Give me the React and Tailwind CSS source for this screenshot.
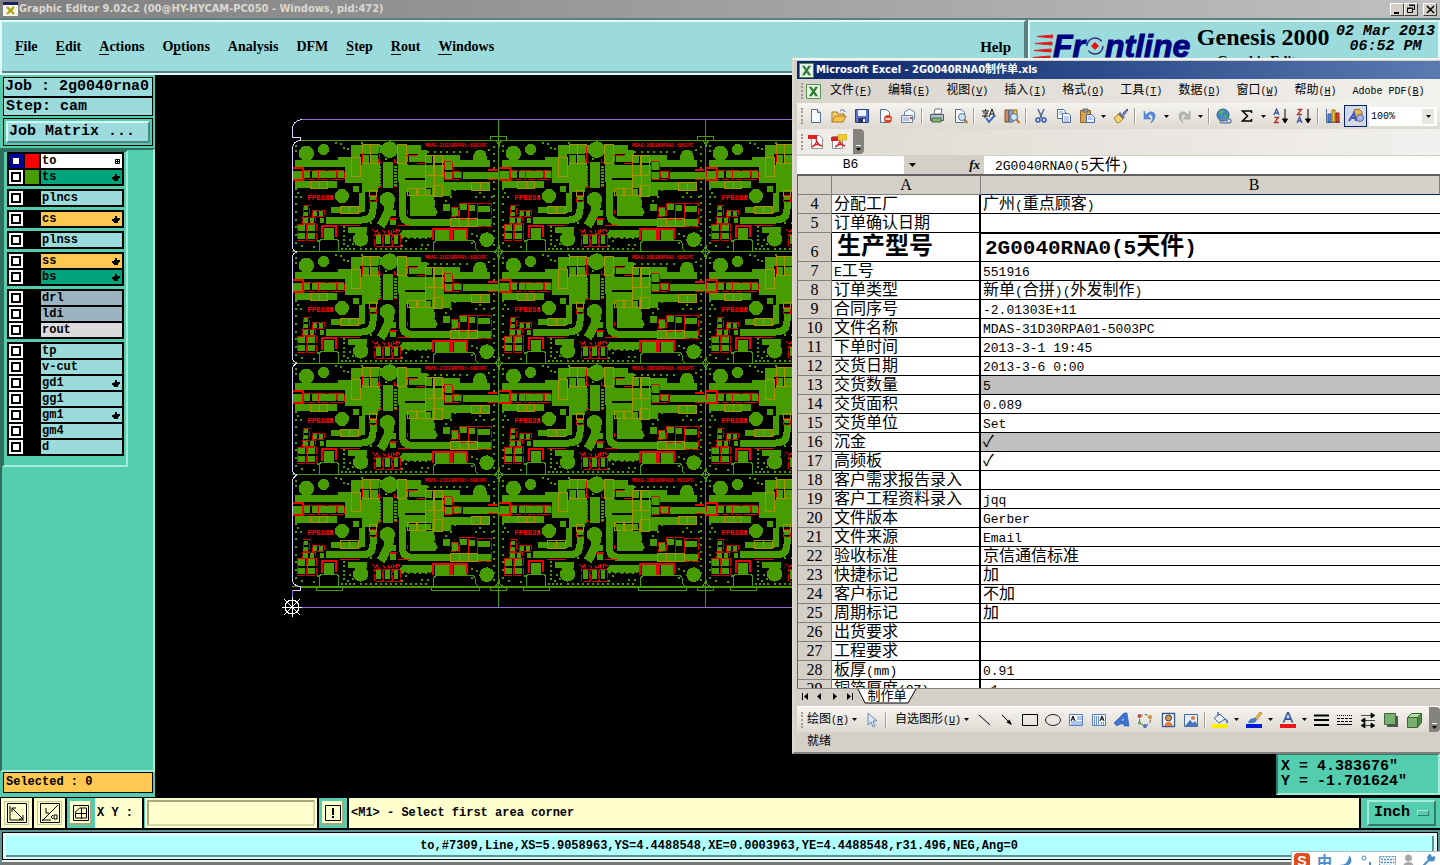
import { Fragment } from 'react';

const menus = [
  ['', 'F', 'ile'],
  ['', 'E', 'dit'],
  ['', 'A', 'ctions'],
  ['O', 'p', 'tions'],
  ['Analysis', '', ''],
  ['DFM', '', ''],
  ['', 'S', 'tep'],
  ['', 'R', 'out'],
  ['', 'W', 'indows'],
];

const layerGroups = [
  [
    { name: 'to', bg: 'bg-white', swatch: 'bg-[#ff0000]', mark: 'grid', active: true },
    { name: 'ts', bg: 'bg-[#00a47c]', swatch: 'bg-[#469c00]', mark: 'hand' },
  ],
  [{ name: 'plncs', bg: 'bg-[#9cdbdb]' }],
  [{ name: 'cs', bg: 'bg-[#ffc850]', mark: 'hand' }],
  [{ name: 'plnss', bg: 'bg-[#9cdbdb]' }],
  [
    { name: 'ss', bg: 'bg-[#ffc850]', mark: 'hand' },
    { name: 'bs', bg: 'bg-[#00a47c]', mark: 'hand' },
  ],
  [
    { name: 'drl', bg: 'bg-[#9cb4bf]' },
    { name: 'ldi', bg: 'bg-[#9cb4bf]' },
    { name: 'rout', bg: 'bg-[#dcdadb]' },
  ],
  [
    { name: 'tp', bg: 'bg-[#9cdbdb]' },
    { name: 'v-cut', bg: 'bg-[#9cdbdb]' },
    { name: 'gd1', bg: 'bg-[#9cdbdb]', mark: 'hand' },
    { name: 'gg1', bg: 'bg-[#9cdbdb]' },
    { name: 'gm1', bg: 'bg-[#9cdbdb]', mark: 'hand' },
    { name: 'gm4', bg: 'bg-[#9cdbdb]' },
    { name: 'd', bg: 'bg-[#9cdbdb]' },
  ],
];

const excelMenus = [
  ['文件', 'F'],
  ['编辑', 'E'],
  ['视图', 'V'],
  ['插入', 'I'],
  ['格式', 'O'],
  ['工具', 'T'],
  ['数据', 'D'],
  ['窗口', 'W'],
  ['帮助', 'H'],
  ['Adobe PDF', 'B'],
];

const rows = [
  [4, '分配工厂', '广州(重点顾客)'],
  [5, '订单确认日期', ''],
  [6, '生产型号', '2G0040RNA0(5天件)'],
  [7, 'E工号', '551916'],
  [8, '订单类型', '新单(合拼)(外发制作)'],
  [9, '合同序号', '-2.01303E+11'],
  [10, '文件名称', 'MDAS-31D30RPA01-5003PC'],
  [11, '下单时间', '2013-3-1 19:45'],
  [12, '交货日期', '2013-3-6 0:00'],
  [13, '交货数量', '5'],
  [14, '交货面积', '0.089'],
  [15, '交货单位', 'Set'],
  [16, '沉金', '✓'],
  [17, '高频板', '✓'],
  [18, '客户需求报告录入', ''],
  [19, '客户工程资料录入', 'jqq'],
  [20, '文件版本', 'Gerber'],
  [21, '文件来源', 'Email'],
  [22, '验收标准', '京信通信标准'],
  [23, '快捷标记', '加'],
  [24, '客户标记', '不加'],
  [25, '周期标记', '加'],
  [26, '出货要求', ''],
  [27, '工程要求', ''],
  [28, '板厚(mm)', '0.91'],
  [29, '铜箔厚度(OZ)', ' 1'],
];

/* ---------- board drawing, three units per screen pixel ---------- */

const copper = [
  [30, 150, 175, 21], [160, 141, 60, 26], [198, 105, 210, 28], [198, 130, 32, 45], [180, 173, 100, 46],
  [228, 160, 56, 74], [204, 228, 76, 20], [222, 240, 18, 20], [295, 156, 30, 78], [340, 166, 138, 52],
  [340, 132, 28, 40], [342, 218, 30, 30], [372, 137, 50, 24], [400, 122, 26, 16], [420, 135, 105, 26],
  [505, 152, 110, 21], [480, 160, 20, 22], [480, 186, 20, 22], [506, 186, 22, 19], [534, 186, 112, 21],
  [372, 210, 106, 24], [470, 218, 145, 22], [440, 236, 57, 22], [372, 238, 66, 18], [22, 183, 28, 24],
  [57, 185, 18, 20], [80, 185, 18, 20], [103, 185, 50, 20], [156, 185, 20, 20], [30, 215, 125, 19],
  [138, 291, 90, 18], [232, 136, 20, 24], [258, 136, 20, 24], [56, 288, 14, 13], [53, 306, 17, 13],
  [83, 305, 14, 14], [101, 305, 14, 14], [54, 326, 16, 14], [74, 326, 14, 14], [104, 326, 14, 14],
  [38, 344, 22, 20], [67, 344, 22, 20], [38, 369, 22, 20], [67, 369, 22, 20], [116, 354, 32, 34],
  [190, 351, 55, 18], [254, 256, 18, 14], [314, 302, 20, 18], [314, 328, 20, 18], [273, 376, 14, 26],
  [300, 376, 14, 26], [326, 376, 14, 26], [450, 361, 42, 30], [507, 361, 38, 30], [474, 283, 22, 20],
  [501, 296, 17, 22], [526, 282, 20, 20], [552, 286, 19, 17], [579, 289, 35, 17], [470, 328, 148, 21],
  [565, 140, 40, 20], [375, 258, 70, 60], [350, 361, 90, 22], [440, 300, 16, 14],
];

const slots = [
  [180, 219, 48, 8], [222, 219, 9, 32], [284, 164, 8, 62], [328, 164, 8, 62], [226, 133, 6, 32],
  [253, 132, 5, 30], [280, 130, 10, 30], [362, 158, 60, 6], [476, 156, 5, 54], [360, 205, 60, 5],
  [503, 207, 135, 5], [440, 130, 5, 30], [365, 256, 8, 26], [55, 208, 120, 6],
];

const silk = [
  [22, 176, 32, 35], [56, 183, 45, 26], [101, 183, 55, 26], [155, 183, 24, 26], [478, 155, 24, 55],
  [504, 184, 26, 24], [54, 286, 18, 36], [82, 303, 36, 18], [52, 324, 38, 18], [36, 343, 28, 48],
  [66, 343, 28, 48], [269, 374, 22, 36], [296, 374, 22, 36], [323, 374, 24, 36], [500, 293, 20, 28],
  [524, 280, 26, 48], [551, 280, 26, 48], [578, 282, 42, 68], [252, 256, 22, 20], [313, 325, 22, 3],
];

const mask = [
  [232, 104, 25, 57], [257, 104, 27, 57], [199, 142, 27, 58], [337, 104, 27, 58], [420, 136, 27, 62],
  [446, 136, 27, 62], [420, 198, 27, 58], [367, 235, 26, 22], [396, 235, 26, 22], [446, 226, 26, 34],
  [560, 217, 25, 24], [585, 217, 27, 24], [76, 215, 26, 20], [102, 215, 26, 20], [166, 289, 27, 23],
  [193, 289, 28, 23], [254, 241, 21, 20], [495, 327, 27, 24], [522, 327, 28, 24], [550, 327, 28, 24],
];

const range = (n, from, step) => Array.from({ length: n }, (_, i) => from + i * step);

const vias = [
  ...range(9, 215, 23).map((y) => [33, y]),
  ...range(15, 112, 21).map((y) => [628, y]),
  ...range(14, 228, 15).map((x) => [x, 417]),
  ...range(4, 172, 12).map((x) => [x, 417]),
  ...range(6, 430, 19).map((x) => [x, 128]),
  ...range(5, 352, 13).map((y) => [176, y]),
  [153, 99], [168, 102], [176, 115], [190, 117], [33, 110], [33, 125], [40, 250], [48, 262], [196, 390],
  [232, 100], [303, 149], [545, 128], [612, 122], [572, 262], [585, 250], [597, 262], [497, 262], [484, 274],
  [510, 240], [575, 128], [412, 406], [430, 406], [100, 395], [88, 412], [258, 340], [240, 360], [350, 408],
  [362, 395], [560, 372], [575, 380], [140, 262], [620, 262], [52, 410], [190, 410], [560, 400], [204, 404],
];

function BoardUnit() {
  return (
    <symbol id="unit" viewBox="21 91 621 336" overflow="visible">
      <g fill="#469c00">
        <circle cx="64" cy="131" r="23" />
        <circle cx="116" cy="119" r="17" />
        <circle cx="314" cy="120" r="25" />
        <circle cx="585" cy="140" r="20" />
        <circle cx="171" cy="259" r="21" />
        <circle cx="227" cy="388" r="23" />
        <circle cx="605" cy="390" r="22" />
        <circle cx="307" cy="270" r="23" />
        {copper.map(([x, y, w, h], i) => (
          <rect key={i} x={x} y={y} width={w} height={h} />
        ))}
        <path d="M444 258l8 22-4 10 10 18-6 10h-20v-60zM346 372l8-11h80l8 8-4 18-8-4-8 6-8-6-8 6-8-6-8 6-10-6-10 4-10-5-8 5-8-6z" />
      </g>
      <g fill="none" stroke="#469c00">
        <path d="M352 230V308Q352 339 385 339H500" strokeWidth="21" />
        <path d="M264 278V298Q264 331 230 331H122" strokeWidth="21" />
        <path d="M231 250V308" strokeWidth="17" />
        <path d="M314 272Q316 305 287 348" strokeWidth="27" />
        <path d="M103 425V395L110 388H155L161 395V425M445 425V400L452 393H565L572 402V416L579 424" strokeWidth="3" />
        <path d="M22 425H641M641 91V425M628 91Q640 96 640 112M654 91Q642 96 642 112M628 425Q640 420 640 406M654 425Q642 420 642 406" strokeWidth="3" />
      </g>
      <g fill="#000">
        {slots.map(([x, y, w, h], i) => (
          <rect key={i} x={x} y={y} width={w} height={h} />
        ))}
      </g>
      <g fill="#469c00">
        {range(7, 168, 9).map((y) => (
          <path key={y} d={`M278 ${y}h10v6h-10zM327 ${y}h9v6h-9z`} />
        ))}
        {vias.map(([x, y], i) => (
          <rect key={i} x={x - 3} y={y - 3} width="6" height="6" />
        ))}
      </g>
      <g fill="none" stroke="#e00000" strokeWidth="3" strokeDasharray="22 5">
        {silk.map(([x, y, w, h], i) => (
          <rect key={i} x={x} y={y} width={w} height={h} />
        ))}
      </g>
      <g fill="none" stroke="#a89000" strokeWidth="3">
        {mask.map(([x, y, w, h], i) => (
          <rect key={i} x={x} y={y} width={w} height={h} />
        ))}
      </g>
      <g fill="none" stroke="#f00000">
        <path d="M22 176H54V211H22M110 384V350H154V382M444 391V357H546V389" strokeWidth="6" />
        <path d="M498 357V390" strokeWidth="10" />
        <path d="M610 180H637" strokeWidth="6" />
        <path d="M610 208H637M165 346H222M280 149V158H290M327 149V158H337M280 230H290M327 230H337M362 137H396M396 160H424M340 346H374M233 131V158M284 110V160M366 300V312M262 358l9 10 6-8 4 12M292 362l8 6M310 360v10h8v-10M326 358v10l8-8v10M338 358l8 8" strokeWidth="3" />
      </g>
      <g fill="#ff0000" fontWeight="bold" className="font-['Liberation_Mono',monospace]">
        <text x="67" y="271" fontSize="22">FPB888</text>
        <text x="420" y="113" fontSize="14">MDAS-31D30RPA01-5003PC</text>
      </g>
    </symbol>
  );
}

function Board() {
  const tops = [65, 177, 288, 400];
  const lefts = [137, 344, 551];
  return (
    <svg className="block h-[722px] w-[1285px] shrink-0" viewBox="0 0 1285 722" shapeRendering="crispEdges">
      <defs>
        <BoardUnit />
      </defs>
      {tops.map((y) => lefts.map((x) => <use key={`${x}-${y}`} href="#unit" x={x} y={y} width="207" height="112" />))}
      <g fill="none" stroke="#469c00">
        <path d="M145 65.500H800M343.500 45V532M550.500 45V532M335.500 65V61.500H351.500V65M542.500 65V61.500H558.500V65" />
        <path d="M145 511.500H800" strokeWidth="2" />
        <path d="M161.500 512V515.500H187.500V512M276.500 512V515.500H324.500V512M335.500 512V515.500H351.500V512M368.500 512V515.500H394.500V512M483.500 512V515.500H531.500V512M542.500 512V515.500H558.500V512M575.500 512V515.500H601.500V512" />
      </g>
      <g fill="none" stroke="#9468dc">
        <path d="M147 44.500H800M137 532.500H800M137.500 515V532" />
      </g>
      <path
        d="M147 44.500Q138 46 137.500 53V62.500H145.500V65.500Q138 66 137.500 73V172Q138 176 142 177Q138 178 137.500 182V283Q138 287 142 288Q138 290 137.500 294V395Q138 399 142 400Q138 402 137.500 406V505Q138 511 145.500 511.500V515.500H137.500"
        fill="none"
        stroke="#ddd0ff"
      />
      <g fill="none" stroke="#fff">
        <circle cx="137" cy="532" r="7" />
        <path d="M127 532.500H147M137.500 522V542M129 524L145 540M145 524L129 540" />
      </g>
    </svg>
  );
}

/* ---------- toolbar icons, 16 x 16 ---------- */

const page = <path d="M3.500 1.500h6l3 3v10h-9z" fill="#f8fbff" stroke="#5a6f98" />;
const lens = (
  <>
    <circle cx="10" cy="9" r="3.500" fill="#cfe6f7" stroke="#56708c" />
    <path d="M12.500 11.500l3 3.500" stroke="#b5762c" strokeWidth="2" />
  </>
);
const acrobat = <path d="M4 13c4-2 5-6 4-9M4 13c3-3 7-3 10-1M8 4c0 3 2 7 6 8" fill="none" stroke="#d8232a" strokeWidth="1.500" />;

const icons = {
  new: <>{page}<path d="M9.500 1.500v3h3" fill="#c7d6ee" stroke="#5a6f98" /></>,
  open: <><path d="M1 14V4h5l1 2h6v3" fill="#f4d476" stroke="#a57b20" /><path d="M1 14l3-6h11l-3 6z" fill="#fbc34d" stroke="#a57b20" /><path d="M9 3q3-3 5 1" fill="none" stroke="#3c64a8" /></>,
  save: <><path d="M1.500 1.500h13v13h-13z" fill="#5a74cc" stroke="#2b3f8c" /><path d="M4 2h8v6H4z" fill="#eef3ff" /><path d="M4.500 10h7v5h-7z" fill="#26345c" /><path d="M9 11h2v3H9z" fill="#fff" /></>,
  permission: <>{page}<circle cx="11" cy="11" r="4" fill="#d8492c" /><path d="M8.500 11h5" stroke="#fff" strokeWidth="1.500" /></>,
  mail: <><path d="M4.500 4l5-3 5 3v7h-10z" fill="#f4f7fc" stroke="#70809c" /><path d="M1.500 7.500h11v7h-11z" fill="#e8eefa" stroke="#70809c" /><path d="M3 10h6M3 12h6" stroke="#7f9ac4" /><path d="M10 9h2v2h-2z" fill="#d8492c" /></>,
  print: <><path d="M5 6l1-5h7l-1 5z" fill="#fff" stroke="#6c7888" /><path d="M1.500 6.500h13v6h-13z" fill="#b8c2cc" stroke="#4c5868" /><path d="M3 10h9v4H3z" fill="#7fc05a" stroke="#4c5868" /></>,
  preview: <>{page}{lens}</>,
  spelling: <><path d="M1 3h7M4.500 1v2M2 5h5L4 7v3M1 8h6" fill="none" stroke="#111" /><path d="M8 9l3-8 3 8M9 6h4" fill="none" stroke="#111" /><path d="M5 10l3 4 6-7" fill="none" stroke="#3b69c0" strokeWidth="2" /></>,
  research: <><path d="M1 2h4v12H1z" fill="#cf8e5f" stroke="#7d4c26" /><path d="M5 2h4v12H5z" fill="#8eaadb" stroke="#44608c" /><path d="M9 2h4v9H9z" fill="#e4c45b" stroke="#8c7020" />{lens}</>,
  cut: <><path d="M5 1l4 9M11 1L7 10" stroke="#51688c" strokeWidth="1.500" /><circle cx="5" cy="12" r="2" fill="none" stroke="#2f58b8" strokeWidth="1.500" /><circle cx="11" cy="12" r="2" fill="none" stroke="#2f58b8" strokeWidth="1.500" /></>,
  copy: <><path d="M1.500 1.500h6l2 2v7h-8z" fill="#fff" stroke="#4a68b0" /><path d="M6.500 5.500h6l2 2v7h-8z" fill="#fff" stroke="#4a68b0" /><path d="M3 4h4M3 6h3M8 9h5M8 11h5M8 13h5" stroke="#7f9be0" /></>,
  paste: <><path d="M1.500 2.500h10v12h-10z" fill="#d8a04c" stroke="#8c6420" /><path d="M4 1h5v3H4z" fill="#999" stroke="#666" /><path d="M7.500 6.500h5l3 3v5h-8z" fill="#eef4ff" stroke="#4a68b0" /><path d="M9 9h3M9 11h5" stroke="#7f9be0" /></>,
  painter: <><path d="M10 5l4-4 1 1-4 5z" fill="#8c8ccc" stroke="#50508c" /><path d="M7 4l5 5-2 2-5-5z" fill="#5f6fa0" /><path d="M5 6l5 5q-3 4-6 4L1 10q2 0 4-4z" fill="#f2d774" stroke="#a88424" /></>,
  undo: <path d="M4 7q5-6 9-1 1 5-4 9 3-5 1-8-2-2-4 1l3 3H2V3z" fill="#5b8de0" stroke="#3465b8" strokeWidth=".5" />,
  redo: <path d="M12 7Q7 1 3 6q-1 5 4 9-3-5-1-8 2-2 4 1l-3 3h7V3z" fill="#b8b8b4" stroke="#909090" strokeWidth=".5" />,
  link: <><circle cx="7" cy="7" r="6" fill="#3f88c8" stroke="#2c6090" /><path d="M3 4q3-3 5-2-1 4-4 5zM8 6l4 1-3 4z" fill="#58ae50" /><path d="M6 11h3a2 2 0 010 4H6a2 2 0 010-4zM11 11h2a2 2 0 010 4h-2" fill="none" stroke="#7088a8" strokeWidth="1.500" /></>,
  sum: <path d="M12.500 5V3h-9l5 5-5 5h9v-2" fill="none" stroke="#000" strokeWidth="1.500" />,
  sortAsc: <><path d="M1 7l2.500-6L6 7M2 5h3" fill="none" stroke="#3a55a4" strokeWidth="1.300" /><path d="M1.500 9.500h4l-4 5h4.500" fill="none" stroke="#a83232" strokeWidth="1.300" /><path d="M12 1v13M9.500 11l2.500 4 2.500-4z" stroke="#000" /></>,
  sortDesc: <><path d="M1.500 1.500h4l-4 5h4.500" fill="none" stroke="#a83232" strokeWidth="1.300" /><path d="M1 15l2.500-6L6 15M2 13h3" fill="none" stroke="#3a55a4" strokeWidth="1.300" /><path d="M12 1v13M9.500 11l2.500 4 2.500-4z" stroke="#000" /></>,
  chart: <><path d="M1.500 1v13.500H15" fill="none" stroke="#4a6890" /><path d="M3 6h3v8H3z" fill="#5c8ce0" stroke="#2a4c90" /><path d="M7 2h3v12H7z" fill="#f0c040" stroke="#907010" /><path d="M11 5h3v9h-3z" fill="#d84a30" stroke="#802010" /></>,
  drawing: <><path d="M6 2l5-1 3 3v6l-5 1-3-3z" fill="#e8b850" stroke="#987020" /><circle cx="12" cy="10" r="3.500" fill="#a9b8e0" stroke="#5060a0" /><path d="M1 13L6 5l2 8M3 10h4" fill="none" stroke="#4858b0" strokeWidth="2" /></>,
  pdf: <><path d="M3.500 1.500h8l3 3v10h-11z" fill="#fff" stroke="#909090" /><path d="M0 1h9v4H0z" fill="#e02020" />{acrobat}</>,
  pdfMail: <><path d="M1.500 2.500h10v12h-10z" fill="#fff" stroke="#909090" /><path d="M0 3h7v4H0z" fill="#e02020" />{acrobat}<path d="M7 0h9v6h-5l-2 2V6H7z" fill="#f4cc30" stroke="#b89010" strokeWidth=".5" /></>,
  pointer: <path d="M4 1v12l3-3 2 5 2-1-2-5h4z" fill="#dbe6f8" stroke="#6c88b8" />,
  line: <path d="M3 3l11 10" stroke="#000" />,
  arrow: <><path d="M3 3l8 8" stroke="#000" /><path d="M13 13L7.500 10.500l3-3z" fill="#000" /></>,
  rect: <path d="M.5 2.500h15v11H.5z" fill="none" stroke="#000" />,
  ellipse: <ellipse cx="8" cy="8" rx="7.500" ry="5.500" fill="none" stroke="#222" />,
  textBox: <><path d="M1.500 2.500h13v11h-13z" fill="#f4f8ff" stroke="#5a7cc0" /><path d="M3 9l2-5 2 5M4 7h2" fill="none" stroke="#000" /><path d="M9 5h5M9 7h5M3 10h11M3 12h11" stroke="#6a90d8" /></>,
  vertText: <><path d="M1.500 2.500h13v11h-13z" fill="#f4f8ff" stroke="#5a7cc0" /><path d="M9 9l2-5 2 5M10 7h2" fill="none" stroke="#000" /><path d="M3.500 4v9M5.500 4v9M7.500 4v9M10.500 10v3M12.500 10v3" stroke="#6a90d8" /></>,
  wordArt: <path d="M0 11L10 1h3l2 13h-5v-2H6l-3 2zM7 9h3V5z" fill="#3c74d8" stroke="#2450a0" strokeWidth=".6" fillRule="evenodd" />,
  diagram: <><circle cx="8" cy="8" r="5.500" fill="none" stroke="#555" strokeDasharray="3 2" /><circle cx="2.500" cy="4" r="2" fill="#c04848" /><circle cx="13" cy="5" r="2" fill="#d89030" /><circle cx="8" cy="14" r="2" fill="#4a70c0" /><circle cx="2.500" cy="11" r="1.500" fill="#50a050" /></>,
  clipArt: <><path d="M2.500 1.500h12v13h-12z" fill="#fff" stroke="#3a5c98" strokeWidth="1.400" /><circle cx="8.500" cy="6" r="3" fill="#d89a58" stroke="#333" /><path d="M4.500 14q0-4 4-4t4 4z" fill="#e87838" /></>,
  picture: <><path d="M1.500 2.500h13v12h-13z" fill="#e6effc" stroke="#4a6ab0" /><circle cx="10" cy="6" r="2" fill="#e07848" /><path d="M2 14l5-6 3 3 2-2 2.500 4v1z" fill="#4e74b8" /></>,
  fill: <><path d="M2 6l6-4 5 5-6 4z" fill="#e4ecf8" stroke="#506888" /><path d="M6 4V0M13 7q3 2 2 4" fill="none" stroke="#3c68b8" strokeWidth="1.500" /><path d="M0 12h16v4H0z" fill="#ffee00" /></>,
  lineColor: <><path d="M9 6l5-6 2 1-5 7z" fill="#f0b840" stroke="#906820" strokeWidth=".6" /><path d="M2 11q1-5 7-5l2 2q-2 4-9 3z" fill="#4878c8" /><path d="M0 12h16v4H0z" fill="#0018d8" /></>,
  fontColor: <><path d="M3.500 10.500L8 0l4.500 10.500M5 7h6" fill="none" stroke="#3c5ca8" strokeWidth="1.800" /><path d="M0 12h16v4H0z" fill="#e81818" /></>,
  lineStyle: <path d="M0 3.500h15M0 8h15M0 13h15" stroke="#000" strokeWidth="2" />,
  dashStyle: <><path d="M0 3.500h15" stroke="#000" strokeDasharray="1 1" /><path d="M0 6.500h15M0 9.500h15" stroke="#000" strokeDasharray="3 1" /><path d="M0 12.500h15" stroke="#000" /></>,
  arrowStyle: <path d="M1 3.500h12M3 8.500h12M1 13.500h13M11 1l4 2.500L11 6zM5 6L1 8.500 5 11zM5 11l-4 2.500L5 16zM11 11l4 2.500-4 2.500z" fill="#000" stroke="#000" strokeWidth=".7" />,
  shadow: <><path d="M4 4h11v11H4z" fill="#555" /><path d="M1.500 1.500h11v11h-11z" fill="#78b070" stroke="#386830" /></>,
  cube: <><path d="M1.500 5.500h10v10h-10z" fill="#78b070" stroke="#386830" /><path d="M1.500 5.500l4-4h10l-4 4z" fill="#b4dca8" stroke="#386830" /><path d="M11.500 5.500l4-4v9l-4 5z" fill="#4c8844" stroke="#386830" /></>,
};

const standardBar = [
  'new', 'open', 'save', 'permission', 'mail', '|', 'print', 'preview', '|', 'spelling', 'research', '|',
  'cut', 'copy', 'paste', 'v', 'painter', '|', 'undo', 'v', 'redo', 'v', '|', 'link', 'sum', 'v',
  'sortAsc', 'sortDesc', '|', 'chart', 'drawing',
];
const shapeBar = [
  'line', 'arrow', 'rect', 'ellipse', 'textBox', 'vertText', 'wordArt', 'diagram', 'clipArt', 'picture', '|',
  'fill', 'v', 'lineColor', 'v', 'fontColor', 'v', 'lineStyle', 'dashStyle', 'arrowStyle', 'shadow', 'cube',
];

function Icon({ name }) {
  return <svg className="h-4 w-4" viewBox="0 0 16 16">{icons[name]}</svg>;
}

function Caret() {
  return <svg className="h-[3px] w-[5px]" viewBox="0 0 5 3"><path d="M0 0h5L2.500 3z" /></svg>;
}

function Grip() {
  return <span className="ml-1 h-4 w-[3px] shrink-0 border-l-2 border-dotted border-[#a09c94]" />;
}

function Tools({ items }) {
  return items.map((item, i) => {
    if (item === '|') return <span key={i} className="mx-[2px] h-4 w-[2px] shrink-0 border-l border-[#a09c94] bg-white" />;
    if (item === 'v') {
      return (
        <button key={i} aria-label="More" className="flex h-[22px] w-[11px] shrink-0 items-center justify-center">
          <Caret />
        </button>
      );
    }
    return (
      <button
        key={i}
        aria-label={item}
        className={`flex h-[22px] w-[23px] shrink-0 items-center justify-center ${item === 'drawing' ? 'border border-[#0a246a] bg-[#d4d8e8]' : ''}`}
      >
        <Icon name={item} />
      </button>
    );
  });
}

function BarEnd() {
  return (
    <button aria-label="Toolbar options" className="flex h-full w-[11px] shrink-0 flex-col items-center justify-end gap-[2px] rounded-r bg-[#85837e] pb-[3px]">
      <span className="h-px w-[5px] bg-white" />
      <Caret />
    </button>
  );
}

// Latin runs are set smaller so that they take half the width of a Chinese character
function Mixed({ text, latin }) {
  return text.split(/([\u2700-\uffff]+)/).filter(Boolean).map((part, i) => (
    part.charCodeAt(0) >= 0x2700 ? <Fragment key={i}>{part}</Fragment> : <span key={i} className={latin}>{part}</span>
  ));
}

function MenuLabel({ text, hotkey }) {
  return (
    <>
      <Mixed text={text} latin="text-[10px]" />
      <span className="text-[10px]">(<u>{hotkey}</u>)</span>
    </>
  );
}

function TitleBar() {
  const box = 'flex h-[13px] w-[14px] items-center justify-center border border-t-white border-l-white border-r-[#404040] border-b-[#404040] bg-[#d4d0c8]';
  return (
    <header className="flex h-[18px] shrink-0 items-center bg-linear-to-r from-[#808080] to-[#c0c0c0] pr-[3px] pl-[3px]">
      <svg className="h-[14px] w-[15px]" viewBox="0 0 15 14">
        <path d="M0 0h15v14H0z" fill="#f4f4e8" />
        <path d="M0 0h15v3H0z" fill="#182060" />
        <path d="M4 5l7 7M11 5l-7 7" stroke="#a8a000" strokeWidth="2" />
      </svg>
      <h1 className="ml-px flex-1 pt-px font-['DejaVu_Sans_Condensed','DejaVu_Sans',sans-serif] text-[11px] font-bold text-[#dcd8d0]">
        Graphic Editor 9.02c2 (00@HY-HYCAM-PC050 - Windows, pid:472)
      </h1>
      <button aria-label="Minimize" className={box}><svg className="h-[9px] w-[9px]" viewBox="0 0 9 9"><path d="M1 7h5v2H1z" /></svg></button>
      <button aria-label="Restore" className={box}>
        <svg className="h-[10px] w-[10px]" viewBox="0 0 10 10"><path d="M3.500 1.500h5v4h-2M3 1h6M1.500 4.500h5v4h-5zM1 4h6" fill="none" stroke="#000" /></svg>
      </button>
      <button aria-label="Close" className={`${box} ml-[5px]`}>
        <svg className="h-[9px] w-[9px]" viewBox="0 0 9 9"><path d="M1 1l7 7M8 1L1 8" stroke="#000" strokeWidth="1.500" /></svg>
      </button>
    </header>
  );
}

function Logo() {
  return (
    <div className="flex items-center text-[32px] leading-[32px] font-bold text-[#000080] italic [-webkit-text-stroke:1px_#000080]">
      <svg className="h-[28px] w-[20px]" viewBox="0 0 20 28">
        <path d="M20 3L4 4.500 20 6zM19 10L2 11.500 19 13zM18 17L1 18.500 18 20zM17 24L0 25.500 17 27z" fill="#e02020" stroke="#e02020" />
      </svg>
      Fr
      <svg className="h-[20px] w-[20px]" viewBox="0 0 20 20">
        <circle cx="10" cy="10" r="8" fill="none" stroke="#303080" strokeWidth="1.500" strokeDasharray="20 5" />
        <path d="M10 6l4 4-4 4-4-4z" fill="#e81010" />
      </svg>
      ntline
    </div>
  );
}

function MenuStrip() {
  return (
    <div className="flex h-[57px] shrink-0 gap-[2px] border-t-2 border-[#5b8080] bg-[#5b8080]">
      <nav className="flex flex-1 items-center border-2 border-[#dffafa] border-r-[#5b8080] bg-[#9cdbdb] px-[13px] shadow-[inset_0_-2px_0_#5b8080]">
        <div className="flex flex-1 gap-[18px] pb-[2px]">
          {menus.map(([before, key, after]) => (
            <button key={before + key} className="text-[14px] leading-5 font-bold">
              {before}<span className="border-b border-black">{key}</span>{after}
            </button>
          ))}
        </div>
        <button className="pb-[2px] text-[15px] leading-5 font-bold">Help</button>
      </nav>
      <div className="flex w-[412px] items-start overflow-hidden border-2 border-[#dffafa] border-b-[#5b8080] bg-[#9cdbdb] pl-[3px]">
        <div className="shrink-0 pt-[8px] font-['Liberation_Sans',sans-serif]"><Logo /></div>
        <div className="flex flex-1 flex-col items-center">
          <p className="text-[24px] leading-[30px] font-bold whitespace-nowrap">Genesis 2000</p>
          <p className="text-[14px] leading-5 font-bold">Graphic Editor</p>
        </div>
        <p className="shrink-0 pt-[2px] pr-[3px] text-center font-['Liberation_Mono',monospace] text-[15px] leading-[15px] font-bold whitespace-nowrap italic">
          02 Mar 2013<br />06:52 PM
        </p>
      </div>
    </div>
  );
}

function Mark({ kind }) {
  if (kind === 'grid') {
    return <svg className="h-[5px] w-[5px]" viewBox="0 0 5 5"><path d="M.5.5h4v4h-4zM2.500 0v5M0 2.500h5" fill="none" stroke="#000" /></svg>;
  }
  if (kind === 'hand') {
    return <svg className="h-[7px] w-[8px]" viewBox="0 0 8 7"><path d="M3 0h2v2h3v2H7v1H6v2H2V6H1V5H0V3h2V2h1z" /></svg>;
  }
  return null;
}

function SidePanel() {
  return (
    <aside className="flex w-[155px] shrink-0 flex-col bg-[#54cdae] font-['Liberation_Mono',monospace] font-bold">
      <div className="pt-[2px] pr-[2px] pl-[3px] text-[15px] leading-[18px] whitespace-nowrap">
        <p className="h-[20px] border border-black bg-[#9cdbdb] pl-px">Job : 2g0040rna0</p>
        <p className="h-[19px] border border-black bg-[#9cdbdb] pl-[2px]">Step: cam</p>
        <div className="mt-[2px] border border-black p-[2px]">
          <button className="block h-[22px] w-full border-2 border-t-[#d5f7f7] border-l-[#d5f7f7] border-r-[#4c8888] border-b-[#4c8888] bg-[#9cdbdb] pl-px text-left leading-[18px]">
            Job Matrix ...
          </button>
        </div>
      </div>
      <div className="mt-[2px] flex-1 border-2 border-t-[#2f6e5e] border-l-[#2f6e5e] border-r-[#a5ecd8] border-b-[#a5ecd8]">
        <div className="w-[126px] border-2 border-t-[#2f6e5e] border-l-[#2f6e5e] border-r-[#a5ecd8] border-b-[#a5ecd8] pr-[2px] pb-[9px] pl-[3px]">
          <div className="flex flex-col gap-[3px]">
            {layerGroups.map((group) => (
              <div key={group[0].name} className="flex flex-col gap-[2px] bg-black p-[2px]">
                {group.map((layer) => (
                  <label key={layer.name} className="flex h-[14px] gap-[2px]">
                    <input
                      type="checkbox"
                      className={`h-[14px] w-[14px] shrink-0 appearance-none border-2 bg-white outline-2 outline-offset-[-4px] ${layer.active ? 'border-[#0000a0] outline-[#000080]' : 'border-white outline-black'}`}
                    />
                    <span className={`w-[14px] shrink-0 ${layer.swatch || 'bg-black'}`} />
                    <span className={`flex flex-1 items-center justify-between pr-[2px] pl-px text-[12px] leading-[14px] ${layer.bg}`}>
                      {layer.name}
                      <Mark kind={layer.mark} />
                    </span>
                  </label>
                ))}
              </div>
            ))}
          </div>
        </div>
      </div>
      <p className="mr-[2px] mb-[4px] ml-[3px] h-[21px] border border-black bg-[#ffc850] pl-[2px] text-[12px] leading-[19px]">Selected : 0</p>
    </aside>
  );
}

function CommandRow() {
  const cream = 'flex w-[31px] shrink-0 items-center justify-center border-2 border-[#ffffce] bg-[#ffffce] outline outline-offset-[-4px] outline-[#c8c89c]';
  const teal = 'flex shrink-0 items-center justify-center border-[3px] border-[#54cdae] bg-[#ffffce] shadow-[inset_-2px_-2px_0_#a8a87c]';
  return (
    <div className="flex h-[33px] shrink-0 gap-[2px] border-t border-b-2 border-black bg-black pl-px font-['Liberation_Mono',monospace] text-[12px] font-bold">
      <button aria-label="Diagonal" className={cream}>
        <svg className="h-5 w-5" viewBox="0 0 20 20"><path d="M.5.5h19v19H.5zM3 3v14h14M5 5l11 11M5 9V5h4M12 16h4v-4" fill="none" stroke="#000" /></svg>
      </button>
      <button aria-label="Angle" className={cream}>
        <svg className="h-5 w-5" viewBox="0 0 20 20"><path d="M.5.5h19v19H.5zM2 18L18 2M6 5v5h3M2 17h9M13 12l-2 2 2 2M14 12h3v4h-3z" fill="none" stroke="#000" /></svg>
      </button>
      <button aria-label="Grid" className={`${teal} w-[28px]`}>
        <svg className="h-4 w-4" viewBox="0 0 16 16"><path d="M.5.5h15v15H.5zM2.500 7l4-4h7v10h-11zM8.500 3v11M2 8.500h12" fill="none" stroke="#000" /></svg>
      </button>
      <label htmlFor="xy" className="-ml-[2px] flex w-[47px] shrink-0 items-center bg-[#ffffce] pl-[2px] whitespace-pre">X Y :</label>
      <div className="flex w-[173px] shrink-0 border-l border-[#54cdae] bg-[#ffffce] py-[2px] pr-[2px] pl-[2px]">
        <input
          id="xy"
          className="w-full border-2 border-t-[#a8a87c] border-l-[#a8a87c] border-r-[#d8d8ac] border-b-[#d8d8ac] bg-[#ffffce] px-1"
        />
      </div>
      <button aria-label="Alert" className={`${teal} w-[28px]`}>
        <svg className="h-4 w-4" viewBox="0 0 16 16"><path d="M.5.5h15v15H.5z" fill="none" stroke="#000" /><path d="M7 3h2v7H7zM7 11h2v2H7z" /></svg>
      </button>
      <p className="flex flex-1 items-center bg-[#ffffce] pl-[2px]">&lt;M1&gt; - Select first area corner</p>
      <div className="w-[79px] shrink-0 bg-[#54cdae] py-[2px] pr-[4px] pl-[6px]">
        <button className="flex h-full w-full items-center justify-between border-2 border-t-[#a5ecd8] border-l-[#a5ecd8] border-r-[#2f7d69] border-b-[#2f7d69] px-[5px] text-[15px]">
          Inch
          <span className="h-[6px] w-[12px] border border-t-[#a5ecd8] border-l-[#a5ecd8] border-r-[#2f7d69] border-b-[#2f7d69]" />
        </button>
      </div>
    </div>
  );
}

function StatusRow() {
  return (
    <footer className="h-[35px] shrink-0 border-x-2 border-t-2 border-b-[3px] border-[#5f9191] border-b-[#777] bg-[#e8f4f4]">
      <div className="h-[28px] border border-black bg-[#d8fcfc] p-[3px]">
        <p className="flex h-[21px] items-center justify-center border-r-2 border-b-2 border-[#5f9191] bg-[#b2ffff] font-['Liberation_Mono',monospace] text-[12px] font-bold">
          to,#7309,Line,XS=5.9058963,YS=4.4488548,XE=0.0003963,YE=4.4488548,r31.496,NEG,Ang=0
        </p>
      </div>
    </footer>
  );
}

function ExcelLogo() {
  return (
    <svg className="h-[15px] w-[15px]" viewBox="0 0 16 16">
      <path d="M.5.5h15v15H.5z" fill="#e8f2e4" stroke="#4c8c48" />
      <path d="M3 3h3l2 3 2-3h3L9.500 8l3.500 5h-3l-2-3-2 3H3l3.500-5z" fill="#2c7c34" />
    </svg>
  );
}

function Sheet() {
  const head = "border-r border-b border-[#808080] bg-[#d4d0c8] p-0 text-center font-['Liberation_Serif',serif] text-[16px] leading-[18px] font-normal";
  return (
    <div className="h-[514px] overflow-hidden border-t-2 border-l border-[#606060]">
      <table className="w-full table-fixed border-separate border-spacing-0">
        <thead>
          <tr className="h-[18px]">
            <th className={`${head} w-[34px]`} aria-label="Corner" />
            <th className={`${head} w-[149px]`}>A</th>
            <th className={`${head} border-b-[#0a246a] bg-[#b5bcd4]`}><span className="pl-[88px]">B</span></th>
          </tr>
        </thead>
        <tbody>
          {rows.map(([number, label, value]) => {
            const big = number === 6;
            const grey = number === 13 || number === 16;
            const latin = big ? 'text-[21px]' : 'text-[13px]';
            const line = big ? 'h-[28px] text-[24px] leading-[30px] font-bold' : 'h-[18px] text-[16px] leading-[20px]';
            return (
              <tr key={number}>
                <th className={`${head} ${big ? 'border-r-[#0a246a] bg-[#b5bcd4] pt-[10px]' : ''}`}>{number}</th>
                <td className={`border-r-2 border-b border-black p-0 whitespace-nowrap ${big ? 'pl-[5px]' : 'pl-[2px]'}`}>
                  <div className={line}><Mixed text={label} latin={latin} /></div>
                </td>
                <td className={`border-b border-black p-0 whitespace-pre ${grey ? 'bg-[#c0c0c0]' : 'bg-white'} ${big ? 'pl-[4px] shadow-[inset_0_1px_0_#000]' : 'pl-[2px]'}`}>
                  <div className={line}><Mixed text={value} latin={latin} /></div>
                </td>
              </tr>
            );
          })}
        </tbody>
      </table>
    </div>
  );
}

function SheetTabs() {
  return (
    <div className="flex h-[16px] items-start border-t border-[#808080] bg-[#d4d0c8]">
      {['M1 0h1v7H1zM7 0v7L3 3.500z', 'M5 0v7L1 3.500z', 'M2 0v7l4-3.500z', 'M1 0v7l4-3.500zM6 0h1v7H6z'].map((d) => (
        <button key={d} aria-label="Scroll sheets" className="flex h-[15px] w-[15px] items-center justify-center">
          <svg className="h-[7px] w-[8px]" viewBox="0 0 8 7"><path d={d} /></svg>
        </button>
      ))}
      <button className="relative h-[15px] w-[60px] text-[13px] leading-[15px]">
        <svg className="absolute inset-0 h-[15px] w-[60px]" viewBox="0 0 60 15"><path d="M1 0l7 14h43l8-14" fill="#fff" stroke="#000" /></svg>
        <span className="relative">制作单</span>
      </button>
    </div>
  );
}

function ExcelWindow() {
  return (
    <section className="absolute top-[58px] right-0 left-[792px] border-t-2 border-b-2 border-l-2 border-t-[#f4f2ee] border-b-[#808080] border-l-[#dcd8d0] bg-[#d4d0c8] pt-px pl-[3px] font-['Liberation_Mono','Noto_Sans_CJK_SC',monospace] text-black">
      <div className="flex h-[18px] items-center gap-[2px] bg-linear-to-r from-[#0a246a] to-[#5a7ab0] pl-[2px] font-['DejaVu_Sans_Condensed','Noto_Sans_CJK_SC',sans-serif] text-[11px] leading-[18px] font-bold text-white">
        <ExcelLogo />
        Microsoft Excel - 2G0040RNA0制作单.xls
      </div>
      <nav className="flex h-[24px] items-center overflow-hidden bg-linear-to-r from-[#d8d4cc] to-[#f4f2ee] text-[12px] whitespace-nowrap">
        <Grip />
        <span className="mr-[9px] ml-[2px]"><ExcelLogo /></span>
        <div className="flex gap-[16px]">
          {excelMenus.map(([text, hotkey]) => (
            <button key={hotkey}><MenuLabel text={text} hotkey={hotkey} /></button>
          ))}
        </div>
      </nav>
      <div className="flex h-[26px] items-center overflow-hidden bg-linear-to-b from-[#f6f4f0] to-[#dedad2]">
        <Grip />
        <Tools items={standardBar} />
        <div className="ml-[2px] flex h-[19px] w-[68px] shrink-0 items-center bg-white pr-[3px]">
          <input aria-label="Zoom" defaultValue="100%" className="w-full min-w-0 bg-transparent pl-[2px] text-[10px]" />
          <button aria-label="Zoom list" className="flex h-[15px] w-[12px] shrink-0 items-center justify-center bg-[#e8e6e2]"><Caret /></button>
        </div>
      </div>
      <div className="flex h-[26px] bg-linear-to-r from-[#dedad2] to-[#f2f0ee]">
        <div className="flex h-[25px] items-center bg-[#eeece8]">
          <Grip />
          <Tools items={['pdf', 'pdfMail']} />
          <span className="w-[3px]" />
          <BarEnd />
        </div>
      </div>
      <div className="flex h-[19px] items-center">
        <input aria-label="Name box" defaultValue="B6" className="h-[18px] w-[107px] bg-white pt-px text-center text-[13px]" />
        <button aria-label="Names" className="flex h-full w-[17px] items-center justify-center">
          <svg className="h-[4px] w-[7px]" viewBox="0 0 7 4"><path d="M0 0h7L3.500 4z" /></svg>
        </button>
        <span className="w-[63px] pr-[4px] text-right font-['Liberation_Serif',serif] text-[13px] leading-[18px] font-bold italic">fx</span>
        <p className="h-[18px] flex-1 bg-white pl-[11px] text-[16px] leading-[20px]"><Mixed text="2G0040RNA0(5天件)" latin="text-[13px]" /></p>
      </div>
      <div className="bg-white"><Sheet /></div>
      <SheetTabs />
      <div className="mt-[2px] flex h-[26px] items-center overflow-hidden border-t border-white bg-linear-to-b from-[#f6f4f0] to-[#dedad2] text-[12px] whitespace-nowrap">
        <Grip />
        <button className="ml-[3px]"><MenuLabel text="绘图" hotkey="R" /></button>
        <Tools items={['v', 'pointer', '|']} />
        <button className="ml-[6px]"><MenuLabel text="自选图形" hotkey="U" /></button>
        <Tools items={['v', ...shapeBar]} />
        <span className="flex-1" />
        <BarEnd />
      </div>
      <p className="h-[20px] pl-[10px] text-[12px] leading-[20px]">就绪</p>
    </section>
  );
}

function InputMethodBar() {
  return (
    <div className="absolute right-0 bottom-0 flex h-[14px] w-[149px] items-start gap-[7px] overflow-hidden border border-r-0 border-b-0 border-[#a8bccc] bg-white pt-px pl-[2px] text-[#4c8cc8]">
      <span className="h-[16px] w-[16px] rounded-sm bg-[#e04c1c] text-center font-['Liberation_Sans',sans-serif] text-[14px] leading-[16px] font-bold text-white">S</span>
      <span className="font-['Noto_Sans_CJK_SC',sans-serif] text-[15px] leading-[16px] font-bold">中</span>
      <svg className="mt-[2px] h-[14px] w-[14px] shrink-0" viewBox="0 0 14 14"><path d="M10 0q6 7-2 11-5 2-8-1 10 0 10-10z" fill="currentColor" /></svg>
      <svg className="mt-[2px] h-[14px] w-[12px] shrink-0" viewBox="0 0 12 14"><circle cx="4" cy="3" r="2" fill="none" stroke="currentColor" /><path d="M9 7h2v3l-2 2z" fill="currentColor" /></svg>
      <svg className="mt-[3px] h-[12px] w-[17px] shrink-0" viewBox="0 0 17 12"><path d="M.5.5h16v11H.5zM2 3.500h13M2 6.500h13M4 9.500h9" fill="none" stroke="currentColor" strokeDasharray="2 1" strokeWidth="1.500" /></svg>
      <svg className="mt-px h-[14px] w-[11px] shrink-0" viewBox="0 0 11 14"><circle cx="5.500" cy="4" r="3.500" fill="#a8a8a8" /><path d="M0 14q0-6 5.500-6t5.500 6z" fill="#a8a8a8" /></svg>
      <svg className="mt-px h-[14px] w-[14px] shrink-0" viewBox="0 0 14 14"><path d="M1 13l7-7M9 1q-4 3 0 5t5-3l-3 1-1-1z" fill="currentColor" stroke="currentColor" strokeWidth="2" /></svg>
    </div>
  );
}

export default function App() {
  return (
    <main className="relative flex h-screen flex-col overflow-hidden bg-black font-['Liberation_Serif',serif] text-black">
      <TitleBar />
      <MenuStrip />
      <div className="flex min-h-0 flex-1">
        <SidePanel />
        <div className="relative min-w-0 flex-1 overflow-hidden bg-black">
          <Board />
          <p className="absolute right-0 bottom-[2px] h-[42px] w-[164px] border-2 border-[#2f7d69] border-r-[#a5ecd8] border-b-[#a5ecd8] bg-[#54cdae] pt-[4px] pl-[3px] font-['Liberation_Mono',monospace] text-[15px] leading-[15px] font-bold whitespace-nowrap">
            X = 4.383676"<br />Y = -1.701624"
          </p>
        </div>
      </div>
      <CommandRow />
      <StatusRow />
      <ExcelWindow />
      <InputMethodBar />
    </main>
  );
}
